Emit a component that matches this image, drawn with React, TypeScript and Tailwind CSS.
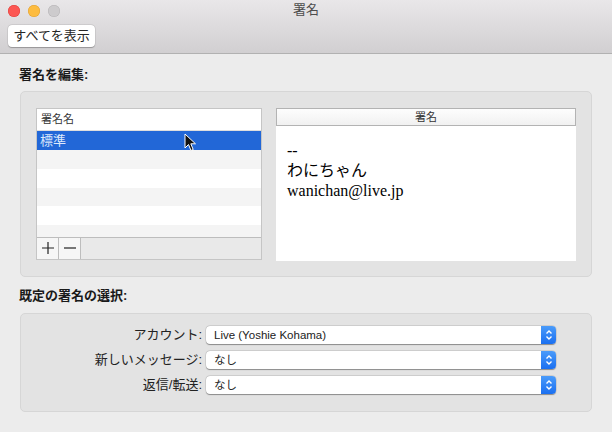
import React from "react";

const UI = { fontFamily: '"Liberation Sans", "Noto Sans CJK JP", sans-serif' };
const SERIF = { fontFamily: '"Liberation Serif", "Noto Sans CJK JP", serif' };

function Popup({ text }: { text: string }) {
  return (
    <div className="flex h-[18px] w-[350px] rounded-[4px] bg-white shadow-[0_0.5px_1px_rgba(0,0,0,0.35),0_0_0_0.5px_rgba(0,0,0,0.12)]">
      <div className="flex-1 pl-[8px] text-[11.5px] leading-[18px] text-[#222]">{text}</div>
      <div className="flex h-[18px] w-[15px] items-center justify-center rounded-r-[4px] bg-gradient-to-b from-[#4a9bfa] to-[#1a6ff0]">
        <svg width="8" height="12" viewBox="0 0 8 12">
          <path d="M1.5 4.5 L4 2 L6.5 4.5" fill="none" stroke="white" strokeWidth="1.4" />
          <path d="M1.5 7.5 L4 10 L6.5 7.5" fill="none" stroke="white" strokeWidth="1.4" />
        </svg>
      </div>
    </div>
  );
}

export default function App() {
  const rows = ["bg-[#f4f4f4]", "bg-white", "bg-[#f4f4f4]", "bg-white"];
  return (
    <div className="flex h-[432px] w-[612px] flex-col overflow-hidden bg-[#ececec]" style={UI}>
      {/* Title bar + toolbar */}
      <div className="relative h-[54px] border-b border-[#b1b1b1] bg-gradient-to-b from-[#e9e7e9] to-[#d1cfd1]">
        <div className="flex items-center gap-[8px] pl-[8px] pt-[5px]">
          <div className="h-[12px] w-[12px] rounded-full bg-[#fc5753] shadow-[inset_0_0_0_0.5px_#df3d3a]" />
          <div className="h-[12px] w-[12px] rounded-full bg-[#fdbc40] shadow-[inset_0_0_0_0.5px_#de9f34]" />
          <div className="h-[12px] w-[12px] rounded-full bg-[#cdcbcd] shadow-[inset_0_0_0_0.5px_#b5b3b5]" />
        </div>
        <div className="absolute left-0 right-0 top-[2px] text-center text-[13px] leading-[16px] text-[#4d4d4d]">署名</div>
        <div className="ml-[8px] mt-[8px] flex h-[22px] w-[87px] items-center justify-center rounded-[4px] bg-white text-[13px] text-[#262626] shadow-[0_0.5px_1px_rgba(0,0,0,0.25),0_0_0_0.5px_rgba(0,0,0,0.1)]">
          すべてを表示
        </div>
      </div>

      {/* Body */}
      <div className="flex flex-col px-[20px]">
        <div className="-ml-[1px] mt-[13px] h-[16px] text-[13px] font-bold leading-[16px] text-[#1a1a1a]">署名を編集:</div>
        <div className="mt-[8px] flex h-[186px] gap-[14px] rounded-[5px] border border-[#d6d6d6] bg-[#e3e3e3] px-[15px] pt-[16px]">
          {/* list */}
          <div className="flex h-[152px] w-[226px] flex-col border border-[#c5c5c5] bg-white">
            <div className="h-[22px] border-b border-[#dedede] pl-[4px] text-[11px] leading-[21px] text-[#333]">署名名</div>
            <div className="relative h-[19px] bg-[#2267d7] pl-[3px] text-[13px] leading-[19px] text-[#dce8fb]">
              標準
              <svg className="absolute left-[147px] top-[2px]" width="14" height="20" viewBox="0 0 14 20">
                <path d="M1 1 L1 15 L4.5 11.5 L7 17.5 L9.2 16.5 L6.8 10.8 L11.5 10.8 Z" fill="#111" stroke="white" strokeWidth="1" strokeLinejoin="round" />
              </svg>
            </div>
            {rows.map((c, i) => (
              <div key={i} className={`h-[19px] ${c}`} />
            ))}
            <div className="h-[12px] bg-[#f4f4f4]" />
            <div className="flex h-[22px] border-t border-[#bdbdbd] bg-[#e9e9e9]">
              <div className="flex h-[21px] w-[22px] items-center justify-center border-r border-[#bdbdbd] bg-[#f6f6f6]">
                <svg width="14" height="14" viewBox="0 0 14 14">
                  <path d="M7 1 V13 M1 7 H13" stroke="#222" strokeWidth="1.2" />
                </svg>
              </div>
              <div className="flex h-[21px] w-[22px] items-center justify-center border-r border-[#bdbdbd] bg-[#f6f6f6]">
                <svg width="14" height="14" viewBox="0 0 14 14">
                  <path d="M1 7 H13" stroke="#222" strokeWidth="1.2" />
                </svg>
              </div>
            </div>
          </div>
          {/* signature view */}
          <div className="flex h-[153px] w-[300px] flex-col bg-white">
            <div className="h-[18px] border border-[#b3b3b3] bg-gradient-to-b from-[#fdfdfd] to-[#f1f1f1] text-center text-[11px] leading-[16px] text-[#333]">署名</div>
            <div className="pl-[11px] pt-[15px] text-[16px] leading-[20px] text-black" style={SERIF}>
              <div>--</div>
              <div>わにちゃん</div>
              <div>wanichan@live.jp</div>
            </div>
          </div>
        </div>

        <div className="-ml-[1px] mt-[11px] h-[16px] text-[13px] font-bold leading-[16px] text-[#1a1a1a]">既定の署名の選択:</div>
        <div className="mt-[9px] flex h-[99px] flex-col gap-[7px] rounded-[5px] border border-[#d6d6d6] bg-[#e3e3e3] pt-[12px]">
          {[
            ["アカウント:", "Live (Yoshie Kohama)"],
            ["新しいメッセージ:", "なし"],
            ["返信/転送:", "なし"],
          ].map(([l, v]) => (
            <div key={l} className="flex h-[18px] items-center">
              <div className="w-[185px] pr-[4px] text-right text-[13px] leading-[18px] text-[#222]">{l}</div>
              <Popup text={v} />
            </div>
          ))}
        </div>
      </div>
    </div>
  );
}
